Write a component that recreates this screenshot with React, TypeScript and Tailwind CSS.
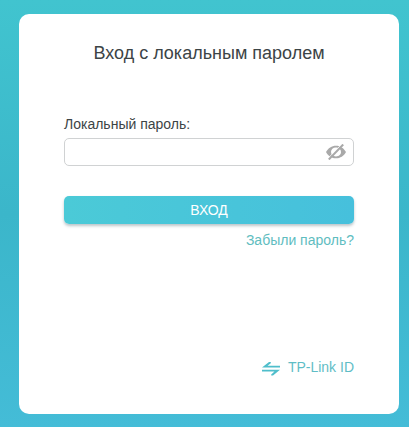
import { useState } from 'react';

const EyeOffIcon = () => {
  return (
    <svg viewBox="0 0 20 16" className="h-4 w-5" fill="none" stroke="#a9a9a9">
      <path
        fill="#a9a9a9"
        stroke="none"
        fillRule="evenodd"
        d="M0 8C2.200 4 5.700 1.700 10 1.700S17.800 4 20 8c-2.200 4-5.700 6.300-10 6.300S2.200 12 0 8Zm10-4.400c-3 0-5 2-5 4.400s2 4.400 5 4.400 5-2 5-4.400-2-4.400-5-4.400Z"
      />
      <path stroke="#fff" strokeWidth="1" d="M15.700 .2 1.700 14.800" />
      <path strokeWidth="2" d="M17.200 .5 2.800 15.500" />
    </svg>
  );
};

const SwitchIcon = () => {
  return (
    <svg viewBox="0 0 18 18" className="size-[18px]" fill="#4fbecb">
      <path d="M0 9.600 7 4h1.800v1.200L5.500 7.800H18v1.800H0Z" />
      <path d="M18 11.800 11 17.600H9.200v-1.200l3.300-2.800H0v-1.800h18Z" />
    </svg>
  );
};

const App = () => {
  const [password, setPassword] = useState('');
  const [visible, setVisible] = useState(false);

  return (
    <main className="flex min-h-screen flex-col bg-linear-to-b from-[#41c4cf] via-[#3bb6ca] to-[#44bcd7] pt-[14px] pr-[10px] pb-[13px] pl-[19px] font-['Liberation_Sans',Arial,sans-serif] text-sm text-[#3c4446]">
      <section className="flex flex-1 flex-col rounded-[10px] bg-white px-[45px] pt-[25px] pb-[37px]">
        <h1 className="text-center text-lg leading-7">Вход с локальным паролем</h1>

        <form className="mt-[47px] flex flex-col" onSubmit={(e) => e.preventDefault()}>
          <label htmlFor="password">Локальный пароль:</label>
          <div className="mt-1 flex h-7 items-center rounded-[5px] border border-[#d0d2d3] pr-[7px]">
            <input
              id="password"
              type={visible ? 'text' : 'password'}
              value={password}
              onChange={(e) => setPassword(e.target.value)}
              className="h-full min-w-0 flex-1 px-2 outline-none"
            />
            <button
              type="button"
              aria-label="Показать пароль"
              aria-pressed={visible}
              onClick={() => setVisible(!visible)}
            >
              <EyeOffIcon />
            </button>
          </div>
          <button
            type="submit"
            className="mt-[30px] h-7 rounded-[5px] bg-linear-to-r from-[#4bcad7] to-[#46c0dc] text-white shadow-[0_2px_3px_rgba(60,90,100,0.35)]"
          >
            ВХОД
          </button>
          <a href="#forgot" className="mt-[6px] self-end text-[#5fbdbf]">
            Забыли пароль?
          </a>
        </form>

        <a href="#tp-link-id" className="mt-auto flex items-center gap-2 self-end text-[#5fbdc6]">
          <SwitchIcon />
          TP-Link ID
        </a>
      </section>
    </main>
  );
};

export default App;
